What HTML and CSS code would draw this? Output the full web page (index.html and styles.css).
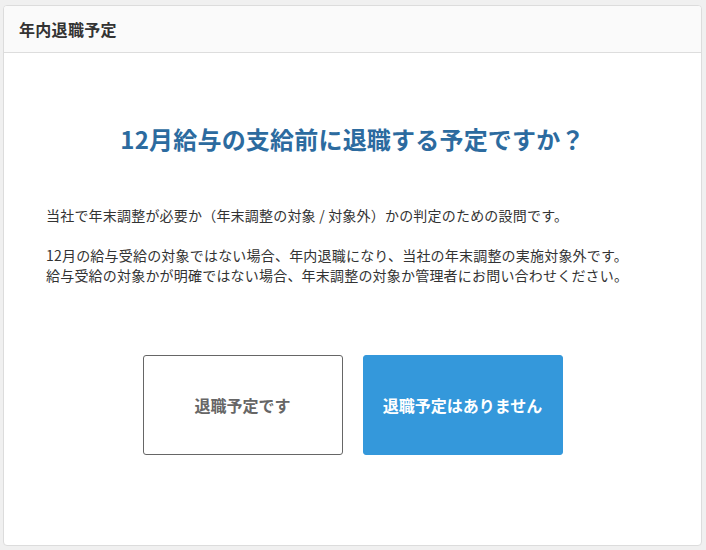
FILE: index.html
```html
<!DOCTYPE html>
<html lang="ja">
<head>
<meta charset="utf-8">
<link rel="stylesheet" href="styles.css">
</head>
<body>
<div class="card">
  <div class="card-header">年内退職予定</div>
  <div class="card-body">
    <h1 class="question">12月給与の支給前に退職する予定ですか？</h1>
    <p class="desc">当社で年末調整が必要か（年末調整の対象 / 対象外）かの判定のための設問です。</p>
    <p class="desc">12月の給与受給の対象ではない場合、年内退職になり、当社の年末調整の実施対象外です。<br>給与受給の対象かが明確ではない場合、年末調整の対象か管理者にお問い合わせください。</p>
    <div class="actions">
      <button class="btn btn-outline">退職予定です</button>
      <button class="btn btn-primary">退職予定はありません</button>
    </div>
  </div>
</div>
</body>
</html>
```

FILE: styles.css
```css
html, body {
  margin: 0;
  padding: 0;
}
body {
  background: #f0f0f0;
  padding: 5px 4px 5px 3px;
  font-family: "Noto Sans CJK JP", "Noto Sans", sans-serif;
  color: #333;
  box-sizing: border-box;
  height: 550px;
}
.card {
  background: #fff;
  border: 1px solid #dcdcdc;
  border-radius: 4px;
  height: 541px;
  box-sizing: border-box;
  overflow: hidden;
}
.card-header {
  height: 47px;
  box-sizing: border-box;
  background: #fafafa;
  border-bottom: 1px solid #dddddd;
  padding: 0 15px;
  display: flex;
  align-items: center;
  font-size: 16px;
  font-weight: bold;
  color: #333;
  line-height: 1;
  letter-spacing: 0.3px;
}
.card-body {
  padding: 0 42px;
}
.question {
  margin: 69px 0 0;
  font-size: 24px;
  line-height: 34px;
  font-weight: bold;
  color: #2c6b9f;
  text-align: center;
  letter-spacing: 0.2px;
}
.desc {
  margin: 0;
  font-size: 14px;
  line-height: 20px;
  color: #333;
  letter-spacing: 0.2px;
}
.question + .desc {
  margin-top: 49px;
}
.desc + .desc {
  margin-top: 20px;
}
.actions {
  display: flex;
  justify-content: center;
  gap: 20px;
  margin-top: 70px;
}
.btn {
  width: 200px;
  height: 100px;
  border-radius: 3px;
  font-family: inherit;
  font-size: 16px;
  font-weight: bold;
  padding: 0;
  cursor: pointer;
}
.btn-outline {
  background: #fff;
  border: 1px solid #666;
  color: #666;
}
.btn-primary {
  background: #3498db;
  border: 1px solid #3498db;
  color: #fff;
}
```
